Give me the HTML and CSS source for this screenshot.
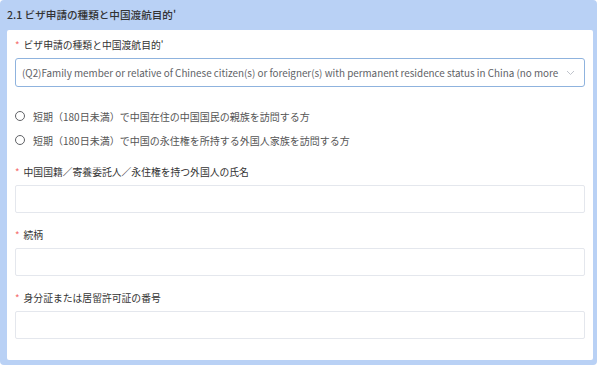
FILE: index.html
```html
<!DOCTYPE html>
<html lang="ja">
<head>
    <meta charset="UTF-8">
    <title>ビザ申請</title>
    <link rel="stylesheet" href="styles.css">
</head>
<body>
<div class="panel">
    <div class="panel-title">2.1 ビザ申請の種類と中国渡航目的'</div>
    <div class="card">
        <div class="field">
            <div class="label"><span class="req">*</span>ビザ申請の種類と中国渡航目的'</div>
            <div class="select">
                <span class="select-text">(Q2)Family member or relative of Chinese citizen(s) or foreigner(s) with permanent residence status in China (no more</span>
                <svg class="chevron" width="9" height="6" viewBox="0 0 9 6"><path d="M1 1l3.5 3.5L8 1" fill="none" stroke="#c0c4cc" stroke-width="1"/></svg>
            </div>
        </div>
        <div class="radios">
            <label class="radio"><span class="dot"></span>短期（180日未満）で中国在住の中国国民の親族を訪問する方</label>
            <label class="radio"><span class="dot"></span>短期（180日未満）で中国の永住権を所持する外国人家族を訪問する方</label>
        </div>
        <div class="field">
            <div class="label"><span class="req">*</span>中国国籍／寄養委託人／永住権を持つ外国人の氏名</div>
            <input class="input" type="text">
        </div>
        <div class="field">
            <div class="label"><span class="req">*</span>続柄</div>
            <input class="input" type="text">
        </div>
        <div class="field">
            <div class="label"><span class="req">*</span>身分証または居留許可証の番号</div>
            <input class="input" type="text">
        </div>
    </div>
</div>
</body>
</html>
```

FILE: styles.css
```css
body{
    margin: 0;
    background-color: #ffffff;
    font-family: "Noto Sans CJK JP", "Noto Sans", sans-serif;
}
.panel{
    width: 597px;
    height: 365px;
    box-sizing: border-box;
    background-color: #b9d1f5;
    border-radius: 4px;
    padding: 0 4px 5px 7px;
}
.panel-title{
    height: 30px;
    line-height: 30px;
    font-size: 10.6px;
    font-weight: 500;
    color: #333333;
}
.card{
    background-color: #ffffff;
    border-radius: 2px;
    height: 330px;
    box-sizing: border-box;
    padding: 7px 8px 0 8px;
}
.field{
    margin-bottom: 14px;
}
.label{
    height: 16px;
    line-height: 16px;
    font-size: 9.8px;
    color: #333333;
    margin-bottom: 5px;
}
.req{
    color: #f56c6c;
    margin-right: 4px;
}
.select{
    height: 29px;
    box-sizing: border-box;
    border: 1px solid #8fb3de;
    border-radius: 3px;
    display: flex;
    align-items: center;
    padding: 0 10px 0 6px;
    gap: 8px;
}
.select-text{
    flex: 1;
    white-space: nowrap;
    font-size: 9.85px;
    color: #606266;
}
.chevron{
    flex: none;
}
.radios{
    margin: 18px 0 13px 0;
    display: flex;
    flex-direction: column;
    gap: 2px;
}
.radio{
    height: 22px;
    display: flex;
    align-items: center;
    font-size: 10px;
    color: #555555;
}
.dot{
    width: 8px;
    height: 8px;
    border: 1px solid #606266;
    border-radius: 50%;
    margin: 0 8px 0 0;
}
.input{
    display: block;
    width: 100%;
    height: 28px;
    box-sizing: border-box;
    border: 1px solid #e4e7ed;
    border-radius: 2px;
    margin: 0;
}
```
